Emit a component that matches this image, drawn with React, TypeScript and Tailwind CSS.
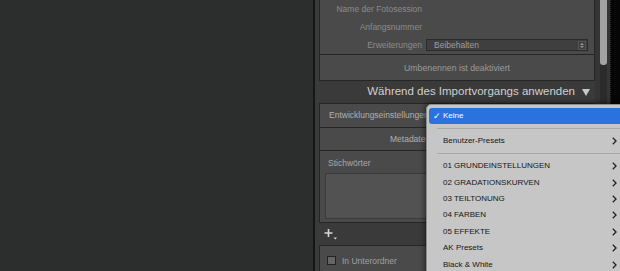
const font = { fontFamily: '"Liberation Sans", Arial, sans-serif' };

const presets = [
  "01 GRUNDEINSTELLUNGEN",
  "02 GRADATIONSKURVEN",
  "03 TEILTONUNG",
  "04 FARBEN",
  "05 EFFEKTE",
  "AK Presets",
  "Black & White",
];

function Chevron() {
  return (
    <svg width="5" height="8" viewBox="0 0 5 8" className="shrink-0">
      <path d="M0.8 0.8 L4 4 L0.8 7.2" fill="none" stroke="#222" strokeWidth="1.3" />
    </svg>
  );
}

function PresetMenu() {
  return (
    <div className="absolute left-[426px] top-[104px] w-[200px] h-[180px] bg-[#c6c6c6] rounded-tl-[5px] border border-[#8e8e8e] shadow-[0_0_6px_rgba(0,0,0,0.75)] pt-[3px] text-[8px] text-[#151515]">
      <div className="ml-[2px] h-[16px] rounded-[3px] bg-[#2a72de] text-white flex items-center pl-[4px]">
        <span className="w-[10px] text-[9px] leading-none">✓</span>
        <span>Keine</span>
      </div>
      <div className="mt-[4px] ml-[10px] h-px bg-[#aaaaaa]" />
      <div className="h-[24px] flex items-center justify-between pl-[16px] pr-[8px]">
        <span>Benutzer-Presets</span>
        <Chevron />
      </div>
      <div className="ml-[10px] h-px bg-[#aaaaaa]" />
      <div className="pt-[4px]">
        {presets.map((p) => (
          <div key={p} className="h-[16.4px] flex items-center justify-between pl-[16px] pr-[8px]">
            <span>{p}</span>
            <Chevron />
          </div>
        ))}
      </div>
    </div>
  );
}

export default function App() {
  return (
    <div className="relative w-[620px] h-[271px] overflow-hidden flex bg-[#2c2d2d]" style={font}>
      <div className="w-[313px] shrink-0 bg-[#2c2d2d]" />

      {/* right panel */}
      <div className="w-[282px] shrink-0 h-full border-l-2 border-[#161616] bg-[#3a3a3a] pl-[4px] text-[8.5px]">
        {/* file naming box */}
        <div className="w-[276px] h-[55px] bg-[#4a4a4a] border-x border-b border-[#262626]">
          {["Name der Fotosession", "Anfangsnummer"].map((l) => (
            <div key={l} className="h-[18px] flex items-center">
              <span className="w-[102px] text-right text-[#8a8a8a]">{l}</span>
            </div>
          ))}
          <div className="h-[18px] flex items-center">
            <span className="w-[102px] text-right text-[#8a8a8a]">Erweiterungen</span>
            <div className="ml-[4px] w-[162px] h-[12px] bg-[#3f3f3f] border border-[#2b2b2b] flex items-center justify-between pl-[7px] pr-[1px]">
              <span className="text-[#9e9e9e]">Beibehalten</span>
              <div className="w-[8px] h-[9px] border border-[#555] flex flex-col items-center justify-center gap-[1px]">
                <svg width="4" height="2" viewBox="0 0 4 2"><path d="M0 2 L2 0 L4 2Z" fill="#9a9a9a" /></svg>
                <svg width="4" height="2" viewBox="0 0 4 2"><path d="M0 0 L2 2 L4 0Z" fill="#9a9a9a" /></svg>
              </div>
            </div>
          </div>
        </div>
        <div className="w-[276px] h-[26px] bg-[#4a4a4a] border-x border-b border-[#262626] flex items-center justify-center pt-[2px] text-[8.75px] text-[#9a9a9a]">
          Umbenennen ist deaktiviert
        </div>

        {/* section header */}
        <div className="w-[276px] h-[22px] flex items-center justify-end pr-[5px] gap-[7px]">
          <span className="text-[11.5px] text-[#d0d0d0]">Während des Importvorgangs anwenden</span>
          <svg width="8" height="7" viewBox="0 0 8 7"><path d="M0 0 L8 0 L4 7Z" fill="#c8c8c8" /></svg>
        </div>

        <div className="w-[276px] bg-[#4a4a4a] border border-[#262626]">
          <div className="h-[24px] flex items-center pl-[9px] border-b border-[#262626] text-[#b0b0b0]">
            Entwicklungseinstellungen
          </div>
          <div className="h-[23px] flex items-center pl-[70px] border-b border-[#262626] text-[#b0b0b0]">
            Metadaten
          </div>
          <div className="h-[71px] px-[5px] pt-[6px]">
            <div className="pl-[3px] text-[#a8a8a8] leading-[12px]">Stichwörter</div>
            <div className="mt-[4px] h-[46px] bg-[#525252] border border-[#3a3a3a]" />
          </div>
        </div>

        {/* add keyword */}
        <div className="h-[22px] flex items-center pl-[5px]">
          <svg width="14" height="12" viewBox="0 0 14 12">
            <path d="M4.5 1 V9 M0.5 5 H8.5" stroke="#d6d6d6" strokeWidth="1.6" />
            <path d="M9.5 9.5 L13 9.5 L11.25 11.5Z" fill="#d6d6d6" />
          </svg>
        </div>

        <div className="w-[276px] h-[40px] bg-[#4a4a4a] border border-[#262626] flex items-start pt-[10px] pl-[7px] gap-[6px]">
          <div className="w-[9px] h-[9px] bg-[#656565] border border-[#222]" />
          <span className="text-[#a0a0a0] leading-[10px]">In Unterordner</span>
        </div>
      </div>

      {/* scrollbar */}
      <div className="w-[15px] shrink-0 h-full bg-[#353535] pl-[5px]">
        <div className="w-[7px] h-full bg-[#2b2b2b]">
          <div className="w-[7px] h-[65px] bg-[#a2a2a2] rounded-b-[3px]" />
        </div>
      </div>
      <div className="w-[10px] shrink-0 h-full bg-[#060606] border-l border-dotted border-[#2a2a2a]" />

      <PresetMenu />
    </div>
  );
}
